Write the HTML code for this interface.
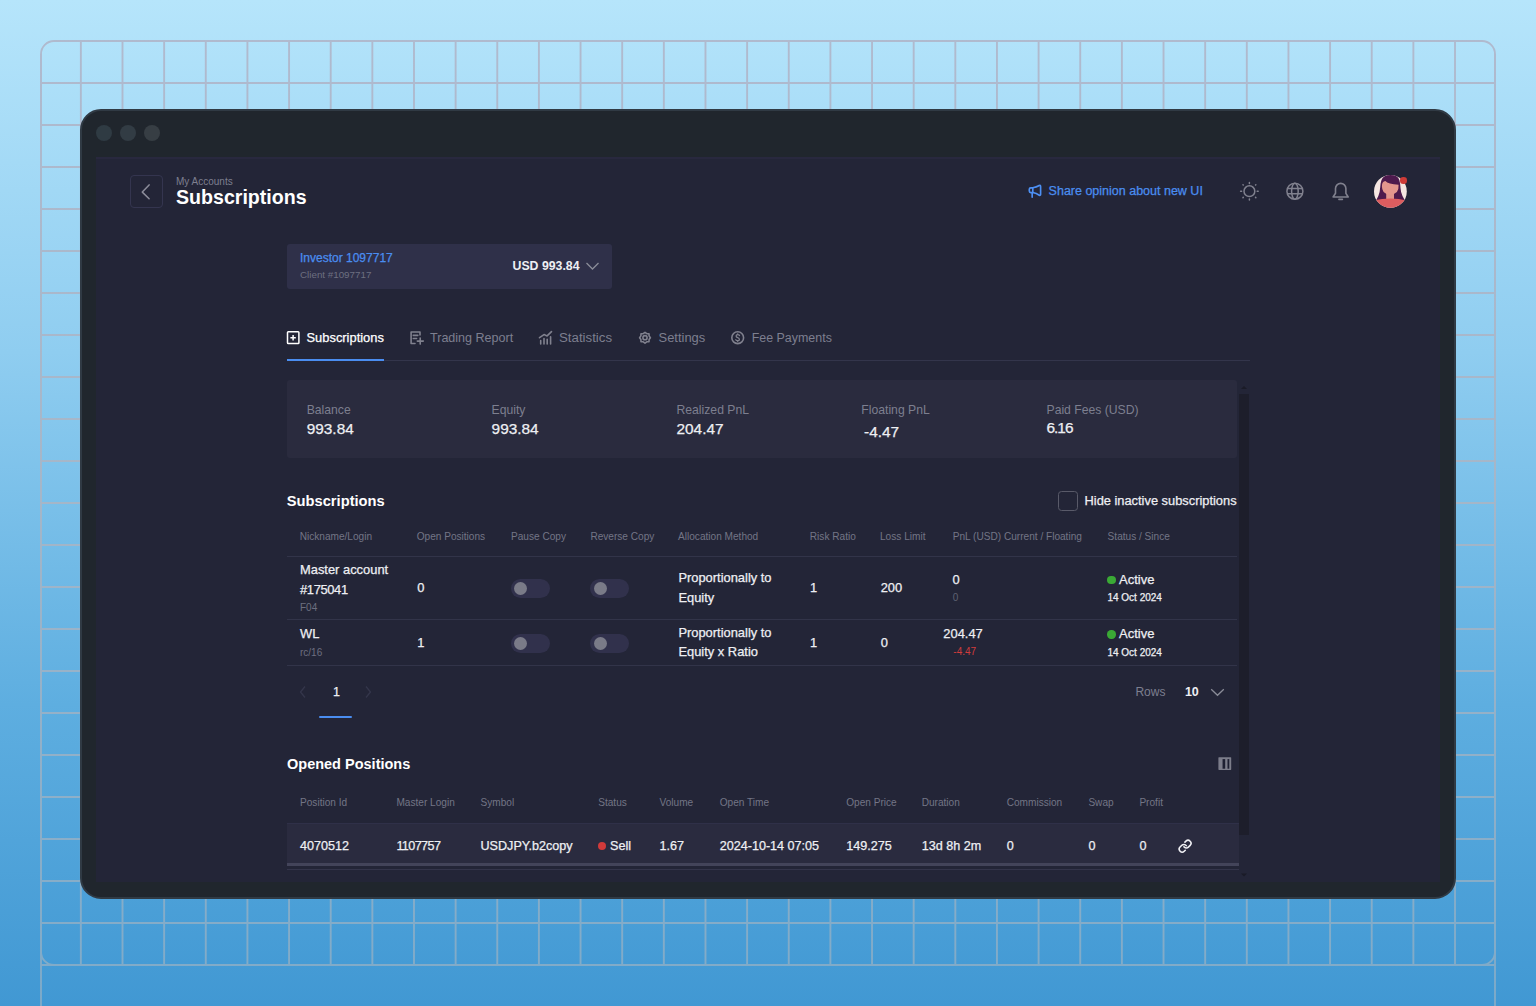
<!DOCTYPE html>
<html><head><meta charset="utf-8"><style>
html,body{margin:0;padding:0;}
body{width:1536px;height:1006px;position:relative;overflow:hidden;font-family:"Liberation Sans",sans-serif;
background:linear-gradient(180deg,#b6e5fb 0%,#8fcdf0 35%,#5eaee0 70%,#4198d3 100%);}
.grid{position:absolute;left:0;top:0}
.win{position:absolute;left:80px;top:109px;width:1376px;height:790px;box-sizing:border-box;background:#20262d;border:2px solid #303a44;border-radius:21px}
.dot{position:absolute;top:125px;width:16px;height:16px;border-radius:50%;background:#2f3b43}
.panel{position:absolute;left:96px;top:157px;width:1344px;height:725px;background:#232537}
.t{position:absolute;white-space:nowrap;line-height:1}
.m{-webkit-text-stroke:0.25px currentColor}
.r{position:absolute}
.ic{position:absolute}
</style></head><body>
<svg class="grid" width="1536" height="1006" viewBox="0 0 1536 1006"><defs><linearGradient id="lg" gradientUnits="userSpaceOnUse" x1="0" y1="30" x2="0" y2="1006"><stop offset="0" stop-color="#b0bace"/><stop offset="0.48" stop-color="#a5b6c8"/><stop offset="1" stop-color="#7eaac8"/></linearGradient></defs><g stroke="url(#lg)" stroke-width="1.9" fill="none">
<line x1="41.00" y1="54" x2="41.00" y2="1006"/><line x1="80.86" y1="41" x2="80.86" y2="965"/><line x1="122.50" y1="41" x2="122.50" y2="965"/><line x1="164.14" y1="41" x2="164.14" y2="965"/><line x1="205.78" y1="41" x2="205.78" y2="965"/><line x1="247.42" y1="41" x2="247.42" y2="965"/><line x1="289.07" y1="41" x2="289.07" y2="965"/><line x1="330.71" y1="41" x2="330.71" y2="965"/><line x1="372.35" y1="41" x2="372.35" y2="965"/><line x1="413.99" y1="41" x2="413.99" y2="965"/><line x1="455.63" y1="41" x2="455.63" y2="965"/><line x1="497.27" y1="41" x2="497.27" y2="965"/><line x1="538.91" y1="41" x2="538.91" y2="965"/><line x1="580.55" y1="41" x2="580.55" y2="965"/><line x1="622.19" y1="41" x2="622.19" y2="965"/><line x1="663.84" y1="41" x2="663.84" y2="965"/><line x1="705.48" y1="41" x2="705.48" y2="965"/><line x1="747.12" y1="41" x2="747.12" y2="965"/><line x1="788.76" y1="41" x2="788.76" y2="965"/><line x1="830.40" y1="41" x2="830.40" y2="965"/><line x1="872.04" y1="41" x2="872.04" y2="965"/><line x1="913.68" y1="41" x2="913.68" y2="965"/><line x1="955.32" y1="41" x2="955.32" y2="965"/><line x1="996.96" y1="41" x2="996.96" y2="965"/><line x1="1038.60" y1="41" x2="1038.60" y2="965"/><line x1="1080.24" y1="41" x2="1080.24" y2="965"/><line x1="1121.89" y1="41" x2="1121.89" y2="965"/><line x1="1163.53" y1="41" x2="1163.53" y2="965"/><line x1="1205.17" y1="41" x2="1205.17" y2="965"/><line x1="1246.81" y1="41" x2="1246.81" y2="965"/><line x1="1288.45" y1="41" x2="1288.45" y2="965"/><line x1="1330.09" y1="41" x2="1330.09" y2="965"/><line x1="1371.73" y1="41" x2="1371.73" y2="965"/><line x1="1413.37" y1="41" x2="1413.37" y2="965"/><line x1="1455.01" y1="41" x2="1455.01" y2="965"/><line x1="1495.00" y1="54" x2="1495.00" y2="1006"/><line x1="54" y1="41.00" x2="1482" y2="41.00"/><line x1="41" y1="83.00" x2="1495" y2="83.00"/><line x1="41" y1="125.00" x2="1495" y2="125.00"/><line x1="41" y1="167.00" x2="1495" y2="167.00"/><line x1="41" y1="209.00" x2="1495" y2="209.00"/><line x1="41" y1="251.00" x2="1495" y2="251.00"/><line x1="41" y1="293.00" x2="1495" y2="293.00"/><line x1="41" y1="335.00" x2="1495" y2="335.00"/><line x1="41" y1="377.00" x2="1495" y2="377.00"/><line x1="41" y1="419.00" x2="1495" y2="419.00"/><line x1="41" y1="461.00" x2="1495" y2="461.00"/><line x1="41" y1="503.00" x2="1495" y2="503.00"/><line x1="41" y1="545.00" x2="1495" y2="545.00"/><line x1="41" y1="587.00" x2="1495" y2="587.00"/><line x1="41" y1="629.00" x2="1495" y2="629.00"/><line x1="41" y1="671.00" x2="1495" y2="671.00"/><line x1="41" y1="713.00" x2="1495" y2="713.00"/><line x1="41" y1="755.00" x2="1495" y2="755.00"/><line x1="41" y1="797.00" x2="1495" y2="797.00"/><line x1="41" y1="839.00" x2="1495" y2="839.00"/><line x1="41" y1="881.00" x2="1495" y2="881.00"/><line x1="41" y1="923.00" x2="1495" y2="923.00"/><line x1="41" y1="965.00" x2="1495" y2="965.00"/>
<rect x="41" y="41" width="1454" height="924" rx="13" ry="13"/>
</g></svg><div class="win"></div>
<div class="dot" style="left:96px"></div><div class="dot" style="left:120px;background:#323c44"></div><div class="dot" style="left:144px;background:#373e44"></div>
<div class="panel"></div>
<div class="r" style="left:96px;top:157px;width:1344px;height:1.5px;background:#28283e"></div>
<div class="r" style="left:130.2px;top:175px;width:32.6px;height:32.6px;border:1px solid #34354f;border-radius:4px;box-sizing:border-box"></div><svg class="ic" style="left:138px;top:183px" width="18" height="18" viewBox="0 0 18 18"><path d="M11.1 1.9 L4.3 9.1 L11.1 15.8" stroke="#8c8d9a" stroke-width="1.5" fill="none" stroke-linecap="round" stroke-linejoin="round"/></svg><div class="t" style="left:176.0px;top:177.00px;font-size:10px;color:#7d7f8f;font-weight:400;">My Accounts</div>
<div class="t" style="left:176.0px;top:188.00px;font-size:19.6px;color:#ffffff;font-weight:700;">Subscriptions</div>
<div class="t m" style="left:1048.6px;top:185.00px;font-size:12.5px;color:#4a8df0;font-weight:400;">Share opinion about new UI</div>
<div class="r" style="left:287px;top:243.6px;width:325px;height:45px;background:#2f3049;border-radius:3px"></div>
<div class="t m" style="left:300.0px;top:252.00px;font-size:12px;color:#4a8df0;font-weight:400;">Investor 1097717</div>
<div class="t" style="left:300.0px;top:270.00px;font-size:9.8px;color:#6d6f80;font-weight:400;">Client #1097717</div>
<div class="t" style="left:512.5px;top:260.00px;font-size:12.3px;color:#eeeff3;font-weight:700;">USD 993.84</div>
<svg class="ic" style="left:585px;top:261px" width="16" height="10" viewBox="0 0 16 10"><path d="M1.5 2 L7.5 8 L13.5 2" stroke="#8a8c98" stroke-width="1.3" fill="none"/></svg><div class="r" style="left:287px;top:359.5px;width:963px;height:1px;background:#33354b;"></div>
<div class="r" style="left:287px;top:358.5px;width:97px;height:2px;background:#4a8df0;"></div>
<div class="t m" style="left:306.5px;top:332.00px;font-size:12.9px;color:#ffffff;font-weight:400;">Subscriptions</div>
<div class="t" style="left:430.0px;top:332.00px;font-size:12.55px;color:#7d7f8f;font-weight:400;">Trading Report</div>
<div class="t" style="left:559.0px;top:331.00px;font-size:13.25px;color:#7d7f8f;font-weight:400;">Statistics</div>
<div class="t" style="left:658.5px;top:332.00px;font-size:12.95px;color:#7d7f8f;font-weight:400;">Settings</div>
<div class="t" style="left:751.7px;top:332.00px;font-size:12.45px;color:#7d7f8f;font-weight:400;">Fee Payments</div>
<div class="r" style="left:287px;top:380px;width:950px;height:78px;background:#2a2b3e;border-radius:3px"></div>
<div class="t" style="left:306.7px;top:404.00px;font-size:12.2px;color:#7d7f8f;font-weight:400;">Balance</div>
<div class="t m" style="left:306.7px;top:421.00px;font-size:15.4px;color:#eeeff3;font-weight:400;">993.84</div>
<div class="t" style="left:491.6px;top:404.00px;font-size:12.2px;color:#7d7f8f;font-weight:400;">Equity</div>
<div class="t m" style="left:491.6px;top:421.00px;font-size:15.4px;color:#eeeff3;font-weight:400;">993.84</div>
<div class="t" style="left:676.5px;top:404.00px;font-size:12.2px;color:#7d7f8f;font-weight:400;">Realized PnL</div>
<div class="t m" style="left:676.5px;top:421.00px;font-size:15.4px;color:#eeeff3;font-weight:400;">204.47</div>
<div class="t" style="left:861.3px;top:404.00px;font-size:12.2px;color:#7d7f8f;font-weight:400;">Floating PnL</div>
<div class="t m" style="left:864.0px;top:424.00px;font-size:15.4px;color:#eeeff3;font-weight:400;">-4.47</div>
<div class="t" style="left:1046.5px;top:404.00px;font-size:12.2px;color:#7d7f8f;font-weight:400;">Paid Fees (USD)</div>
<div class="t m" style="left:1046.5px;top:420.00px;font-size:15.4px;color:#eeeff3;font-weight:400;letter-spacing:-1px">6.16</div>
<div class="r" style="left:1239px;top:394px;width:10px;height:441px;background:#1d1e2b;"></div>
<div class="t" style="left:286.8px;top:494.00px;font-size:14.7px;color:#ffffff;font-weight:700;">Subscriptions</div>
<div class="r" style="left:1058px;top:491px;width:19.7px;height:19.8px;background:transparent;border:1.5px solid #595a69;border-radius:3.5px;box-sizing:border-box"></div>
<div class="t m" style="left:1084.5px;top:495.00px;font-size:12.85px;color:#eeeff3;font-weight:400;">Hide inactive subscriptions</div>
<div class="t" style="left:299.7px;top:532.00px;font-size:10.1px;color:#737586;font-weight:400;">Nickname/Login</div>
<div class="t" style="left:416.7px;top:532.00px;font-size:10.1px;color:#737586;font-weight:400;">Open Positions</div>
<div class="t" style="left:511.0px;top:532.00px;font-size:10.1px;color:#737586;font-weight:400;">Pause Copy</div>
<div class="t" style="left:590.4px;top:532.00px;font-size:10.1px;color:#737586;font-weight:400;">Reverse Copy</div>
<div class="t" style="left:678.0px;top:532.00px;font-size:10.1px;color:#737586;font-weight:400;">Allocation Method</div>
<div class="t" style="left:809.8px;top:532.00px;font-size:10.1px;color:#737586;font-weight:400;">Risk Ratio</div>
<div class="t" style="left:880.0px;top:532.00px;font-size:10.1px;color:#737586;font-weight:400;">Loss Limit</div>
<div class="t" style="left:952.7px;top:532.00px;font-size:10.1px;color:#737586;font-weight:400;">PnL (USD) Current / Floating</div>
<div class="t" style="left:1107.6px;top:532.00px;font-size:10.1px;color:#737586;font-weight:400;">Status / Since</div>
<div class="r" style="left:287px;top:556px;width:950px;height:1px;background:#323449;"></div>
<div class="r" style="left:287px;top:619px;width:950px;height:1px;background:#323449;"></div>
<div class="r" style="left:287px;top:665px;width:950px;height:1px;background:#323449;"></div>
<div class="t m" style="left:300.0px;top:564.00px;font-size:12.9px;color:#eeeff3;font-weight:400;">Master account</div>
<div class="t m" style="left:300.0px;top:584.00px;font-size:12.9px;color:#eeeff3;font-weight:400;letter-spacing:-0.35px">#175041</div>
<div class="t" style="left:300.0px;top:603.00px;font-size:10px;color:#6d6f80;font-weight:400;">F04</div>
<div class="t m" style="left:417.2px;top:582.00px;font-size:12.9px;color:#eeeff3;font-weight:400;">0</div>
<div class="r" style="left:510.7px;top:579.2px;width:39px;height:19.3px;background:#31314c;border-radius:10px"></div>
<div class="r" style="left:513.9px;top:581.9px;width:13.2px;height:13.2px;background:#7a7b88;border-radius:50%"></div>
<div class="r" style="left:590.4px;top:579.2px;width:39px;height:19.3px;background:#31314c;border-radius:10px"></div>
<div class="r" style="left:593.6px;top:581.9px;width:13.2px;height:13.2px;background:#7a7b88;border-radius:50%"></div>
<div class="t m" style="left:678.4px;top:572.00px;font-size:12.9px;color:#eeeff3;font-weight:400;">Proportionally to</div>
<div class="t m" style="left:678.4px;top:592.00px;font-size:12.9px;color:#eeeff3;font-weight:400;">Equity</div>
<div class="t m" style="left:810.0px;top:582.00px;font-size:12.9px;color:#eeeff3;font-weight:400;">1</div>
<div class="t m" style="left:880.7px;top:582.00px;font-size:12.9px;color:#eeeff3;font-weight:400;">200</div>
<div class="t m" style="left:952.6px;top:574.00px;font-size:12.9px;color:#eeeff3;font-weight:400;">0</div>
<div class="t" style="left:952.8px;top:593.00px;font-size:10px;color:#5f6172;font-weight:400;">0</div>
<div class="r" style="left:1107.4px;top:575.5px;width:8.4px;height:8.4px;background:#3aa935;border-radius:50%"></div>
<div class="t m" style="left:1119.0px;top:573.00px;font-size:13px;color:#eeeff3;font-weight:400;">Active</div>
<div class="t m" style="left:1107.4px;top:593.00px;font-size:10px;color:#eeeff3;font-weight:400;">14 Oct 2024</div>
<div class="t m" style="left:300.0px;top:628.00px;font-size:12.9px;color:#eeeff3;font-weight:400;">WL</div>
<div class="t" style="left:300.0px;top:648.00px;font-size:10px;color:#6d6f80;font-weight:400;">rc/16</div>
<div class="t m" style="left:417.2px;top:637.00px;font-size:12.9px;color:#eeeff3;font-weight:400;">1</div>
<div class="r" style="left:510.7px;top:634.1px;width:39px;height:19.3px;background:#31314c;border-radius:10px"></div>
<div class="r" style="left:513.9px;top:636.8px;width:13.2px;height:13.2px;background:#7a7b88;border-radius:50%"></div>
<div class="r" style="left:590.4px;top:634.1px;width:39px;height:19.3px;background:#31314c;border-radius:10px"></div>
<div class="r" style="left:593.6px;top:636.8px;width:13.2px;height:13.2px;background:#7a7b88;border-radius:50%"></div>
<div class="t m" style="left:678.4px;top:627.00px;font-size:12.9px;color:#eeeff3;font-weight:400;">Proportionally to</div>
<div class="t m" style="left:678.4px;top:646.00px;font-size:12.9px;color:#eeeff3;font-weight:400;">Equity x Ratio</div>
<div class="t m" style="left:810.0px;top:637.00px;font-size:12.9px;color:#eeeff3;font-weight:400;">1</div>
<div class="t m" style="left:880.7px;top:637.00px;font-size:12.9px;color:#eeeff3;font-weight:400;">0</div>
<div class="t m" style="left:943.3px;top:628.00px;font-size:12.9px;color:#eeeff3;font-weight:400;">204.47</div>
<div class="t" style="left:953.3px;top:647.00px;font-size:10px;color:#d23c3c;font-weight:400;">-4.47</div>
<div class="r" style="left:1107.4px;top:630.3px;width:8.4px;height:8.4px;background:#3aa935;border-radius:50%"></div>
<div class="t m" style="left:1119.0px;top:627.00px;font-size:13px;color:#eeeff3;font-weight:400;">Active</div>
<div class="t m" style="left:1107.4px;top:648.00px;font-size:10px;color:#eeeff3;font-weight:400;">14 Oct 2024</div>
<svg class="ic" style="left:298px;top:685px" width="10" height="14" viewBox="0 0 10 14"><path d="M7 1.5 L2.5 7 L7 12.5" stroke="#34364b" stroke-width="1.3" fill="none"/></svg><div class="t m" style="left:332.9px;top:686.00px;font-size:12.5px;color:#eeeff3;font-weight:400;">1</div>
<svg class="ic" style="left:363px;top:685px" width="10" height="14" viewBox="0 0 10 14"><path d="M3 1.5 L7.5 7 L3 12.5" stroke="#34364b" stroke-width="1.3" fill="none"/></svg><div class="r" style="left:319px;top:716.4px;width:33px;height:2px;background:#4a8df0;border-radius:1px"></div>
<div class="t" style="left:1135.4px;top:686.00px;font-size:12px;color:#7d7f8f;font-weight:400;">Rows</div>
<div class="t" style="left:1184.9px;top:686.00px;font-size:12.5px;color:#eeeff3;font-weight:700;">10</div>
<svg class="ic" style="left:1209px;top:686px" width="17" height="12" viewBox="0 0 17 12"><path d="M2.2 3.3 L8.5 9.3 L14.8 3.3" stroke="#8a8c98" stroke-width="1.3" fill="none"/></svg><div class="t" style="left:287.0px;top:757.00px;font-size:14.5px;color:#ffffff;font-weight:700;">Opened Positions</div>
<svg class="ic" style="left:1217.5px;top:757px" width="14" height="14" viewBox="0 0 14 14"><rect x="0.4" y="0.2" width="12.8" height="12.7" rx="0.6" fill="#7c7d8a"/><rect x="4.55" y="2.1" width="2.65" height="9.6" fill="#1d1f31"/><rect x="9.5" y="2.1" width="1.8" height="9.6" fill="#1d1f31"/></svg><div class="t" style="left:300.0px;top:798.00px;font-size:10.1px;color:#737586;font-weight:400;">Position Id</div>
<div class="t" style="left:396.4px;top:798.00px;font-size:10.1px;color:#737586;font-weight:400;">Master Login</div>
<div class="t" style="left:480.5px;top:798.00px;font-size:10.1px;color:#737586;font-weight:400;">Symbol</div>
<div class="t" style="left:598.2px;top:798.00px;font-size:10.1px;color:#737586;font-weight:400;">Status</div>
<div class="t" style="left:659.5px;top:798.00px;font-size:10.1px;color:#737586;font-weight:400;">Volume</div>
<div class="t" style="left:719.7px;top:798.00px;font-size:10.1px;color:#737586;font-weight:400;">Open Time</div>
<div class="t" style="left:846.2px;top:798.00px;font-size:10.1px;color:#737586;font-weight:400;">Open Price</div>
<div class="t" style="left:921.7px;top:798.00px;font-size:10.1px;color:#737586;font-weight:400;">Duration</div>
<div class="t" style="left:1006.7px;top:798.00px;font-size:10.1px;color:#737586;font-weight:400;">Commission</div>
<div class="t" style="left:1088.4px;top:798.00px;font-size:10.1px;color:#737586;font-weight:400;">Swap</div>
<div class="t" style="left:1139.4px;top:798.00px;font-size:10.1px;color:#737586;font-weight:400;">Profit</div>
<div class="r" style="left:287px;top:822.5px;width:952px;height:40.5px;background:#2a2b3f;"></div>
<div class="r" style="left:287px;top:822.5px;width:952px;height:1px;background:#2f3048;"></div>
<div class="r" style="left:287px;top:863px;width:952px;height:2.5px;background:#43445a;"></div>
<div class="r" style="left:287px;top:868.7px;width:952px;height:1.3px;background:#34354b;"></div>
<div class="t m" style="left:300.0px;top:840.00px;font-size:12.6px;color:#eeeff3;font-weight:400;">4070512</div>
<div class="t m" style="left:396.4px;top:840.00px;font-size:12.6px;color:#eeeff3;font-weight:400;letter-spacing:-0.6px">1107757</div>
<div class="t m" style="left:480.5px;top:840.00px;font-size:12.6px;color:#eeeff3;font-weight:400;">USDJPY.b2copy</div>
<div class="t m" style="left:610.0px;top:840.00px;font-size:12.6px;color:#eeeff3;font-weight:400;">Sell</div>
<div class="t m" style="left:659.5px;top:840.00px;font-size:12.6px;color:#eeeff3;font-weight:400;">1.67</div>
<div class="t m" style="left:719.7px;top:840.00px;font-size:12.6px;color:#eeeff3;font-weight:400;">2024-10-14 07:05</div>
<div class="t m" style="left:846.2px;top:840.00px;font-size:12.6px;color:#eeeff3;font-weight:400;">149.275</div>
<div class="t m" style="left:921.7px;top:840.00px;font-size:12.6px;color:#eeeff3;font-weight:400;">13d 8h 2m</div>
<div class="t m" style="left:1006.7px;top:840.00px;font-size:12.6px;color:#eeeff3;font-weight:400;">0</div>
<div class="t m" style="left:1088.4px;top:840.00px;font-size:12.6px;color:#eeeff3;font-weight:400;">0</div>
<div class="t m" style="left:1139.4px;top:840.00px;font-size:12.6px;color:#eeeff3;font-weight:400;">0</div>
<div class="r" style="left:598.2px;top:842px;width:8px;height:8px;background:#d13a3a;border-radius:50%"></div>
<svg class="ic" style="left:1177px;top:838px" width="16" height="16" viewBox="0 0 16 16"><g transform="translate(1.02,1.12) scale(0.59)" stroke="#f0f0f4" stroke-width="2.7" fill="none" stroke-linecap="round" stroke-linejoin="round"><path d="M10 13a5 5 0 0 0 7.54.54l3-3a5 5 0 0 0-7.07-7.07l-1.72 1.71"/><path d="M14 11a5 5 0 0 0-7.54-.54l-3 3a5 5 0 0 0 7.07 7.07l1.71-1.71"/></g></svg><svg class="ic" style="left:0;top:0" width="1536" height="1006" viewBox="0 0 1536 1006"><g fill="none" stroke="#4d90f3" stroke-width="1.65" stroke-linejoin="round" stroke-linecap="round"><path d="M1032.8 187.8 H1030.8 Q1029.3 187.8 1029.3 189.3 V191.05 Q1029.3 192.55 1030.8 192.55 H1032.8 Z"/><path d="M1032.8 187.8 Q1036.5 187.2 1039.2 185.5 Q1040.6 184.9 1040.6 186.4 V194.2 Q1040.6 195.7 1039.3 195.2 Q1036.5 193.3 1032.8 192.55"/><path d="M1032.17 192.55 V197.2"/></g><g fill="none" stroke="#80818e" stroke-width="1.5" stroke-linecap="round"><circle cx="1249.4" cy="191.2" r="5.4"/><path d="M1249.40 183.40 L1249.40 182.40 M1255.55 185.05 L1255.83 184.77 M1257.20 191.20 L1258.20 191.20 M1255.55 197.35 L1255.83 197.63 M1249.40 199.00 L1249.40 200.00 M1243.25 197.35 L1242.97 197.63 M1241.60 191.20 L1240.60 191.20 M1243.25 185.05 L1242.97 184.77"/></g><g fill="none" stroke="#80818e" stroke-width="1.5"><circle cx="1294.9" cy="191.2" r="8"/><ellipse cx="1294.9" cy="191.2" rx="3.3" ry="8"/><path d="M1287.5 188.5 H1302.3 M1287.5 193.7 H1302.3"/></g><g fill="none" stroke="#80818e" stroke-width="1.6" stroke-linejoin="round" stroke-linecap="round"><path d="M1333.1 197 L1335.5 193.3 V188.6 A5.2 5.2 0 0 1 1345.9 188.6 V193.3 L1348.2 197 Z"/><path d="M1338.9 199.4 H1342.4"/></g><g fill="none" stroke="#ffffff" stroke-width="1.5"><rect x="287.5" y="331.7" width="11.4" height="11.9" rx="0.8"/><path d="M290.4 337.8 H295.8 M293.1 335.1 V340.5"/></g><g fill="none" stroke="#80818e" stroke-width="1.6" stroke-linecap="round" stroke-linejoin="round"><path d="M420 335 V332 H411.1 V343.5 H415"/><path d="M413.3 335.4 H417.8 M413.3 338.5 H416.6 M417.3 341.1 H423.3 M420.2 338.1 V344.1"/><path d="M539.5 337.7 L544 334.6 L547.1 335.9 L551.5 331.6"/><path d="M540.7 343.9 V340.6 M544 343.9 V338.5 M547.2 343.9 V339.3 M550.6 343.9 V336.8"/><path d="M645 332.3 L646.8 333.6 L649 333.7 L649.1 335.9 L650.4 337.7 L649.1 339.5 L649 341.7 L646.8 341.8 L645 343.1 L643.2 341.8 L641 341.7 L640.9 339.5 L639.6 337.7 L640.9 335.9 L641 333.7 L643.2 333.6 Z"/><circle cx="645" cy="337.7" r="2.1"/><circle cx="737.7" cy="337.7" r="5.9"/></g><g fill="none" stroke="#80818e" stroke-width="1.3" stroke-linecap="round"><path d="M739.5 335.6 Q739.1 334.7 737.7 334.7 Q736.1 334.7 736.1 336 Q736.1 337.2 737.7 337.6 Q739.4 338.1 739.4 339.4 Q739.4 340.7 737.7 340.7 Q736.2 340.7 735.8 339.8 M737.7 333.9 V334.7 M737.7 340.7 V341.5"/></g><path d="M1241 389 L1244 386 L1247 389 Z" fill="#1a1b27"/><path d="M1241 873.5 L1244 876.5 L1247 873.5 Z" fill="#1a1b27"/></svg><svg class="ic" style="left:1374px;top:174.8px" width="33" height="33" viewBox="0 0 33 33"><defs><clipPath id="av"><circle cx="16.4" cy="16.4" r="16.4"/></clipPath></defs><g clip-path="url(#av)"><rect width="33" height="33" fill="#f6e7e2"/><path d="M16.5 -0.5 Q7.6 -0.2 6.6 8.5 Q6.1 13.5 5.6 17 Q4.6 21.5 2.2 25.2 L30.8 25.2 Q28.2 21.5 27.1 17 Q26.4 13 26.1 8.5 Q25.3 -0.5 16.5 -0.5 Z" fill="#4d1a4d"/><path d="M12.2 17 V24 H20 V17 Z" fill="#e0948c"/><path d="M7.9 11.2 Q7.9 6.6 11.4 6.1 Q14 9.2 24.6 9.8 Q24.9 14.5 22.9 17 Q20.2 19.7 16.2 19.7 Q12 19.7 9.6 17 Q7.9 14.6 7.9 11.2 Z" fill="#e3968d"/><path d="M-1 25.6 Q16.4 21.4 33.8 25.6 V34 H-1 Z" fill="#dc5d5f"/></g></svg><div class="r" style="left:1400.1px;top:177.05px;width:6.6px;height:6.6px;background:#cf3b37;border-radius:50%"></div>

</body></html>
